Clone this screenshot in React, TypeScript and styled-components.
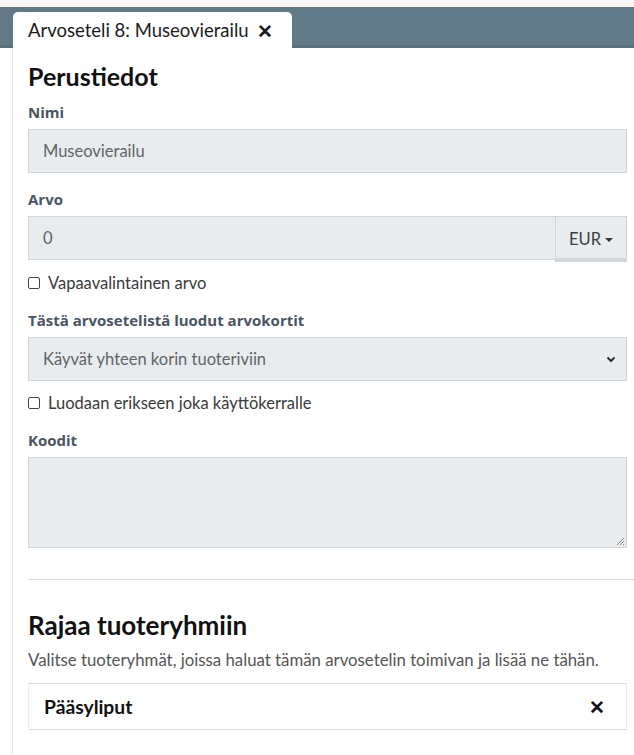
import React from "react";
import styled, { createGlobalStyle } from "styled-components";

const Global = createGlobalStyle`
  html, body { margin: 0; padding: 0; background: #ffffff; }
  body { font-family: Lato, "Noto Sans", sans-serif; color: #222; }
  * { box-sizing: border-box; }
`;

const Page = styled.div`
  width: 634px;
  height: 755px;
  overflow: hidden;
  background: #fff;
`;

const TopStrip = styled.div`
  height: 7px;
  background: #f8f7f3;
`;

const TabBar = styled.div`
  height: 41px;
  background: #627a88;
  border-bottom: 3px solid #5a6f7c;
  display: flex;
  align-items: flex-end;
  padding-left: 13px;
`;

const Tab = styled.div`
  height: 36px;
  margin-bottom: -3px;
  background: #fff;
  border-radius: 5px 5px 0 0;
  display: flex;
  align-items: center;
  gap: 8px;
  padding: 0 19px 0 15px;
  font-size: 18.5px;
  color: #1b1b1b;
`;

const CloseGlyph = styled.span`
  font-size: 19px;
  font-weight: 700;
  line-height: 1;
`;

const Panel = styled.div`
  margin-left: 12px;
  border-left: 1px solid #e4e4e4;
  padding: 14px 7px 0 15px;
  min-height: 707px;
`;

const Heading = styled.h2`
  margin: 0 0 12px;
  font-size: 25px;
  font-weight: 700;
  color: #111;
  line-height: 28px;
`;

const Label = styled.div`
  font-family: "Open Sans", Lato, sans-serif;
  font-size: 15px;
  font-weight: 700;
  color: #4a5561;
  margin-bottom: 7px;
  line-height: 20px;
`;

const Field = styled.div<{ $gap?: number }>`
  margin-bottom: ${(p) => p.$gap ?? 0}px;
`;

const TextBox = styled.div<{ $h?: number }>`
  height: ${(p) => p.$h ?? 44}px;
  background: #e9ecef;
  border: 1px solid #d2d5d8;
  display: flex;
  align-items: center;
  padding: 0 14px;
  font-size: 16.5px;
  color: #5f6466;
  position: relative;
`;

const Group = styled.div`
  display: flex;
`;

const GroupInput = styled(TextBox)`
  flex: 1;
  border-right: none;
`;

const AddonButton = styled.div`
  width: 72px;
  height: 46px;
  background: #e9ecef;
  border: 1px solid #d2d5d8;
  border-bottom: 4px solid #d2d5d8;
  display: flex;
  align-items: center;
  justify-content: center;
  gap: 4px;
  padding-top: 2px;
  font-size: 16.5px;
  color: #3a3f44;
`;

const Caret = styled.span`
  width: 0;
  height: 0;
  border-left: 4px solid transparent;
  border-right: 4px solid transparent;
  border-top: 4px solid #333;
  margin-top: 2px;
`;

const CheckRow = styled.label`
  display: flex;
  align-items: center;
  gap: 8px;
  font-size: 16.5px;
  color: #3a3a3a;
  line-height: 20px;
`;

const Box = styled.span`
  width: 12px;
  height: 12px;
  border: 1px solid #444;
  border-radius: 2px;
  background: #fff;
`;

const Chevron = styled.svg`
  position: absolute;
  right: 10px;
  top: 50%;
  margin-top: -3px;
`;

const Resize = styled.svg`
  position: absolute;
  right: 1px;
  bottom: 1px;
`;

const Divider = styled.hr`
  border: none;
  border-top: 1px solid #dcdcdc;
  margin: 31px -7px 31px 0;
`;

const Heading2 = styled(Heading)`
  font-size: 26px;
  margin-bottom: 10px;
`;

const Help = styled.p`
  margin: 0 0 12px;
  font-size: 16.8px;
  line-height: 22px;
  color: #555;
`;

const ListItem = styled.div`
  height: 47px;
  border: 1px solid #ececec;
  border-top-color: #dedede;
  border-bottom-color: #dedede;
  display: flex;
  align-items: center;
  justify-content: space-between;
  padding: 0 21px 0 15px;
  font-size: 19.3px;
  font-weight: 700;
  color: #111;
`;

export default function App() {
  return (
    <Page>
      <Global />
      <TopStrip />
      <TabBar>
        <Tab>
          Arvoseteli 8: Museovierailu <CloseGlyph>✕</CloseGlyph>
        </Tab>
      </TabBar>
      <Panel>
        <Heading>Perustiedot</Heading>
        <Field $gap={16}>
          <Label>Nimi</Label>
          <TextBox>Museovierailu</TextBox>
        </Field>
        <Field $gap={11}>
          <Label>Arvo</Label>
          <Group>
            <GroupInput>0</GroupInput>
            <AddonButton>
              EUR <Caret />
            </AddonButton>
          </Group>
        </Field>
        <Field $gap={17}>
          <CheckRow>
            <Box /> Vapaavalintainen arvo
          </CheckRow>
        </Field>
        <Field $gap={12}>
          <Label>Tästä arvosetelistä luodut arvokortit</Label>
          <TextBox>
            Käyvät yhteen korin tuoteriviin
            <Chevron width="10" height="7" viewBox="0 0 10 7">
              <path d="M1.5 1.5 L5 5 L8.5 1.5" fill="none" stroke="#222" strokeWidth="1.8" />
            </Chevron>
          </TextBox>
        </Field>
        <Field $gap={17}>
          <CheckRow>
            <Box /> Luodaan erikseen joka käyttökerralle
          </CheckRow>
        </Field>
        <Field>
          <Label>Koodit</Label>
          <TextBox $h={91}>
            <Resize width="10" height="10" viewBox="0 0 10 10">
              <path d="M9 2 L2 9 M9 5 L5 9 M9 8 L8 9" stroke="#888" strokeWidth="1" />
            </Resize>
          </TextBox>
        </Field>
        <Divider />
        <Heading2>Rajaa tuoteryhmiin</Heading2>
        <Help>Valitse tuoteryhmät, joissa haluat tämän arvosetelin toimivan ja lisää ne tähän.</Help>
        <ListItem>
          Pääsyliput <CloseGlyph>✕</CloseGlyph>
        </ListItem>
      </Panel>
    </Page>
  );
}
